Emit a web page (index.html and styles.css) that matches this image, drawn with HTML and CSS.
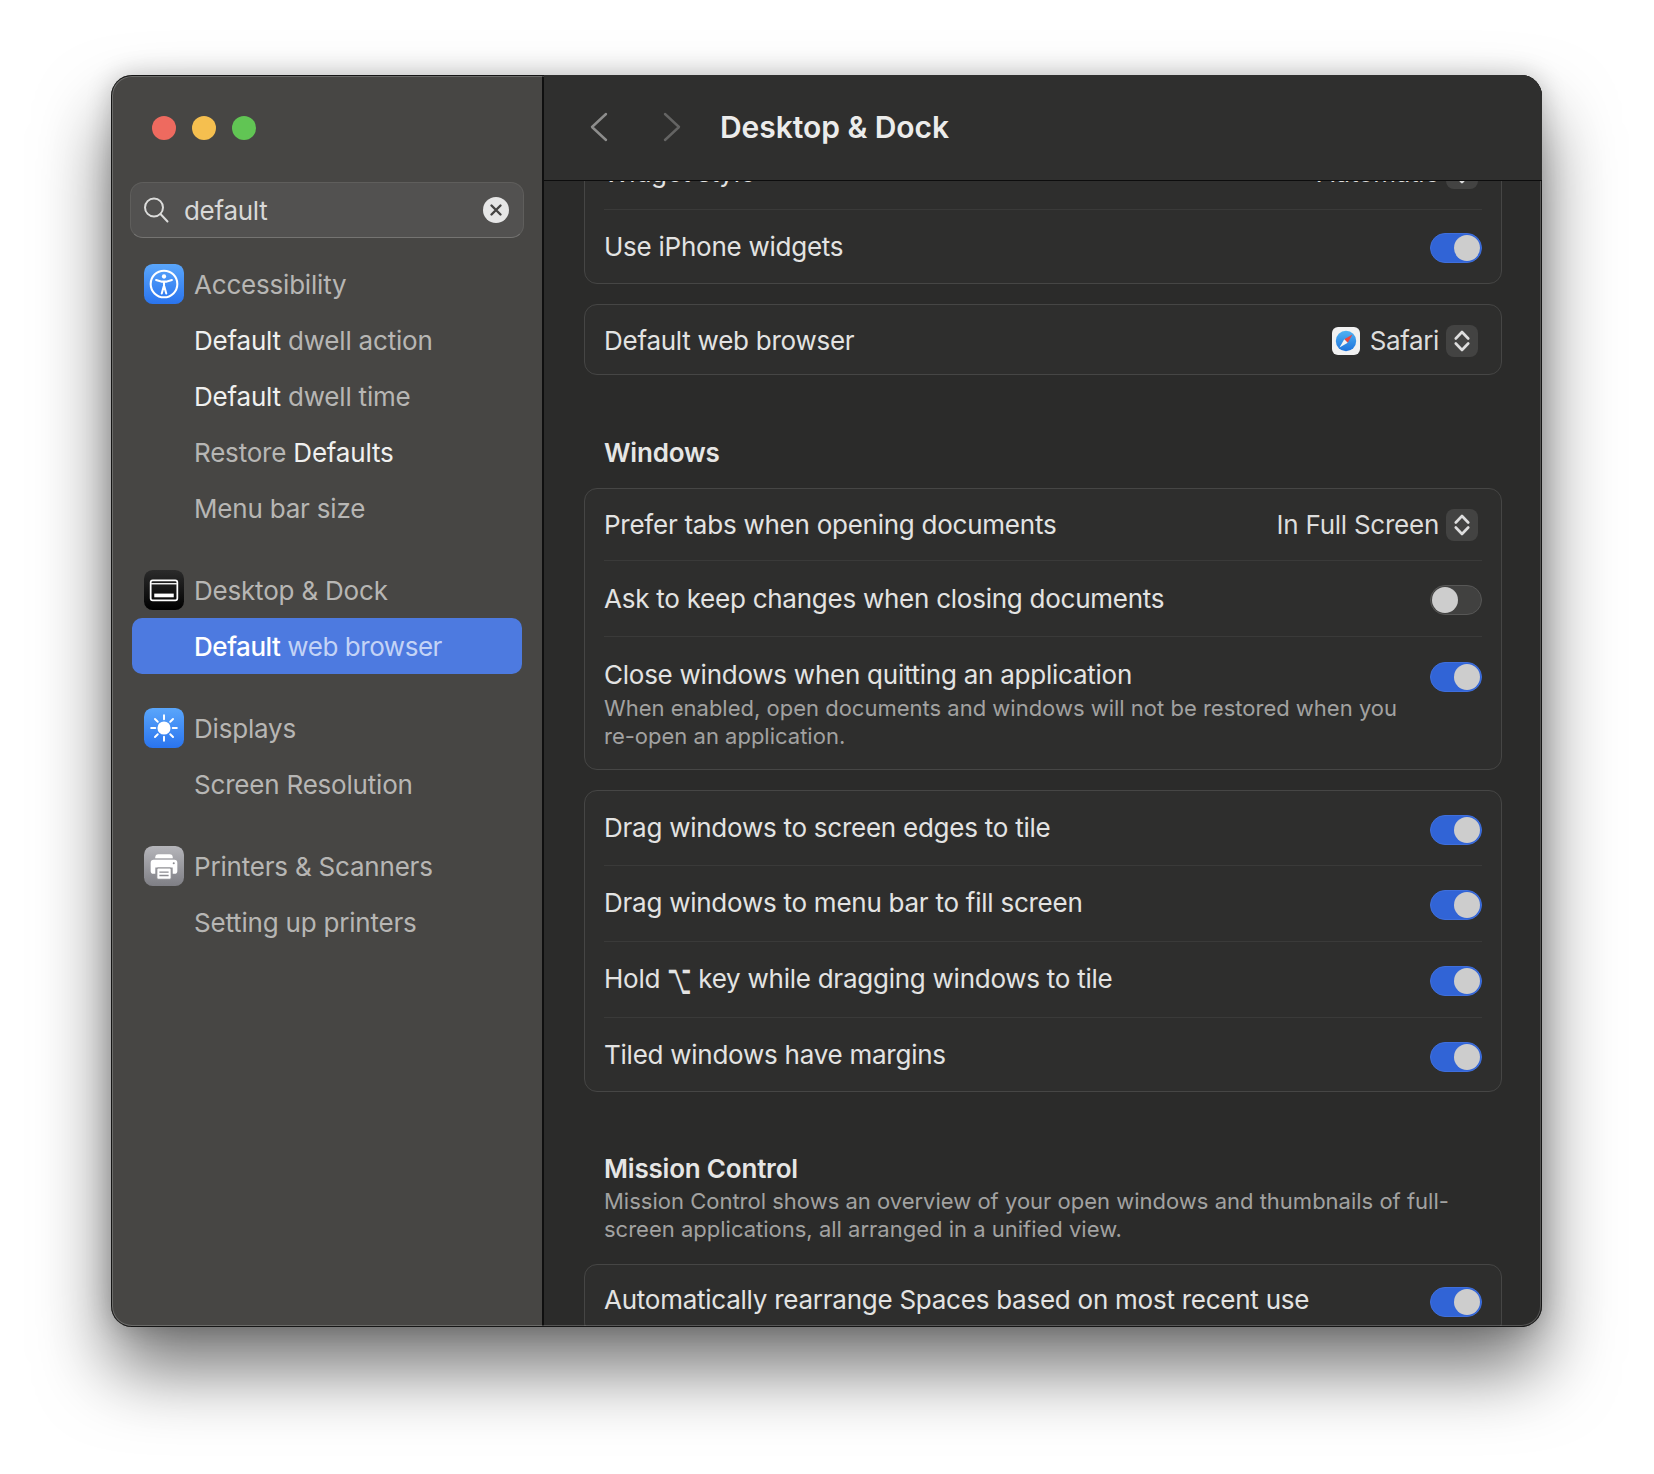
FILE: index.html
```html
<!DOCTYPE html>
<html lang="en">
<head>
    <meta charset="UTF-8">
    <meta name="viewport" content="width=device-width, initial-scale=1.0">
    <title>Desktop &amp; Dock</title>
    <link rel="stylesheet" href="styles.css">
</head>
<body>
    <div class="window">
        <aside class="sidebar">
            <div class="lights">
                <span class="light red"></span>
                <span class="light yellow"></span>
                <span class="light green"></span>
            </div>

            <div class="search">
                <svg class="search-icon" width="28" height="28" viewBox="0 0 28 28" fill="none" stroke="#dcdcdb" stroke-width="2" stroke-linecap="round">
                    <circle cx="12" cy="11.5" r="9"/>
                    <path d="M18.5 18l7 7.5"/>
                </svg>
                <span class="search-text">default</span>
                <span class="search-clear">
                    <svg width="14" height="14" viewBox="0 0 14 14" fill="none" stroke="#454443" stroke-width="2.4" stroke-linecap="round">
                        <path d="M2.5 2.5l9 9M11.5 2.5l-9 9"/>
                    </svg>
                </span>
            </div>

            <div class="group">
                <div class="group-title">
                    <svg class="app-icon" width="40" height="40" viewBox="0 0 39 39">
                        <defs>
                            <linearGradient id="blueA" x1="0" y1="0" x2="0" y2="1">
                                <stop offset="0" stop-color="#5aa6fb"/>
                                <stop offset="1" stop-color="#2a74ee"/>
                            </linearGradient>
                        </defs>
                        <rect width="39" height="39" rx="8.5" fill="url(#blueA)"/>
                        <circle cx="19.5" cy="19.5" r="13" fill="none" stroke="#fff" stroke-width="2"/>
                        <circle cx="19.5" cy="12.2" r="2.1" fill="#fff"/>
                        <path d="M11.8 15.6l5.6 1.6h4.2l5.6-1.6M19.5 17.4v5M19.2 22l-1.9 6.8M19.8 22l1.9 6.8" fill="none" stroke="#fff" stroke-width="2" stroke-linecap="round"/>
                    </svg>
                    <span>Accessibility</span>
                </div>
                <div class="item"><b>Default</b> dwell action</div>
                <div class="item"><b>Default</b> dwell time</div>
                <div class="item">Restore <b>Defaults</b></div>
                <div class="item">Menu bar size</div>
            </div>

            <div class="group">
                <div class="group-title">
                    <svg class="app-icon" width="40" height="40" viewBox="0 0 39 39">
                        <defs>
                            <linearGradient id="blackA" x1="0" y1="0" x2="0" y2="1">
                                <stop offset="0" stop-color="#2b2b2b"/>
                                <stop offset="1" stop-color="#000"/>
                            </linearGradient>
                        </defs>
                        <rect width="39" height="39" rx="8.5" fill="url(#blackA)"/>
                        <rect x="6.5" y="10" width="26" height="19.5" rx="2" fill="none" stroke="#fff" stroke-width="1.7"/>
                        <path d="M7 13.4h25" stroke="#fff" stroke-width="1.3"/>
                        <rect x="10" y="23" width="19" height="3.6" fill="#fff"/>
                    </svg>
                    <span>Desktop &amp; Dock</span>
                </div>
                <div class="item selected"><b>Default</b> web browser</div>
            </div>

            <div class="group">
                <div class="group-title">
                    <svg class="app-icon" width="40" height="40" viewBox="0 0 39 39">
                        <rect width="39" height="39" rx="8.5" fill="url(#blueA)"/>
                        <circle cx="19.5" cy="19.5" r="6.4" fill="#fff"/>
                        <path d="M19.5 7v4M19.5 28v4M7 19.5h4M28 19.5h4M10.7 10.7l2.7 2.7M25.6 25.6l2.7 2.7M10.7 28.3l2.7-2.7M25.6 13.4l2.7-2.7" stroke="#fff" stroke-width="1.9" stroke-linecap="round"/>
                    </svg>
                    <span>Displays</span>
                </div>
                <div class="item">Screen Resolution</div>
            </div>

            <div class="group">
                <div class="group-title">
                    <svg class="app-icon" width="40" height="40" viewBox="0 0 39 39">
                        <defs>
                            <linearGradient id="grayA" x1="0" y1="0" x2="0" y2="1">
                                <stop offset="0" stop-color="#b5b5ba"/>
                                <stop offset="1" stop-color="#7f7f85"/>
                            </linearGradient>
                        </defs>
                        <rect width="39" height="39" rx="8.5" fill="url(#grayA)"/>
                        <path d="M11 11q0-3 3-3h11q3 0 3 3v1H11z" fill="#fff"/>
                        <path d="M9.5 13.5h20q3 0 3 3v8q0 2.5-3 2.5h-1.5v-6H11v6H9.5q-3 0-3-2.5v-8q0-3 3-3z" fill="#fff"/>
                        <rect x="12.5" y="21.5" width="14" height="11" rx="1.2" fill="#fff" stroke="#8b8b90" stroke-width="1"/>
                        <path d="M15 25.5h9M15 28.8h9" stroke="#8b8b90" stroke-width="1.3"/>
                        <circle cx="29" cy="16.8" r="1" fill="#8b8b90"/>
                    </svg>
                    <span>Printers &amp; Scanners</span>
                </div>
                <div class="item">Setting up printers</div>
            </div>
        </aside>

        <main class="content">
            <header class="toolbar">
                <svg class="chevron" width="18" height="30" viewBox="0 0 18 30" fill="none" stroke="#8d8d8c" stroke-width="2.4" stroke-linecap="round" stroke-linejoin="round">
                    <path d="M16 2L2 15l14 13"/>
                </svg>
                <svg class="chevron forward" width="18" height="30" viewBox="0 0 18 30" fill="none" stroke="#646463" stroke-width="2.4" stroke-linecap="round" stroke-linejoin="round">
                    <path d="M2 2l14 13L2 28"/>
                </svg>
                <h1>Desktop &amp; Dock</h1>
            </header>

            <div class="scroll">
                <div class="panel first">
                    <div class="row short">
                        <span class="label">Widget style</span>
                        <span class="picker">Automatic
                            <span class="stepper"><svg width="16" height="24" viewBox="0 0 16 24" fill="none" stroke="#dedede" stroke-width="2.6" stroke-linecap="round" stroke-linejoin="round"><path d="M1.8 9.5L8 3l6.2 6.5M1.8 14.5L8 21l6.2-6.5"/></svg></span>
                        </span>
                    </div>
                    <div class="row">
                        <span class="label">Use iPhone widgets</span>
                        <span class="toggle on"></span>
                    </div>
                </div>

                <div class="panel">
                    <div class="row browser">
                        <span class="label">Default web browser</span>
                        <span class="picker">
                            <svg class="safari" width="28" height="28" viewBox="0 0 28 28">
                                <defs>
                                    <linearGradient id="safariBlue" x1="0" y1="0" x2="0" y2="1">
                                        <stop offset="0" stop-color="#4fb2f2"/>
                                        <stop offset="1" stop-color="#1e73dc"/>
                                    </linearGradient>
                                </defs>
                                <rect width="28" height="28" rx="6" fill="#f1f1f1"/>
                                <circle cx="14" cy="14" r="10.2" fill="url(#safariBlue)"/>
                                <path d="M20.5 7.5L12.3 12.3l3.4 3.4z" fill="#f0443a"/>
                                <path d="M7.5 20.5l8.2-4.8-3.4-3.4z" fill="#f4f4f4"/>
                            </svg>
                            Safari
                            <span class="stepper"><svg width="16" height="24" viewBox="0 0 16 24" fill="none" stroke="#dedede" stroke-width="2.6" stroke-linecap="round" stroke-linejoin="round"><path d="M1.8 9.5L8 3l6.2 6.5M1.8 14.5L8 21l6.2-6.5"/></svg></span>
                        </span>
                    </div>
                </div>

                <div class="section-head">
                    <h2>Windows</h2>
                </div>

                <div class="panel close-up">
                    <div class="row tabs">
                        <span class="label">Prefer tabs when opening documents</span>
                        <span class="picker">In Full Screen
                            <span class="stepper"><svg width="16" height="24" viewBox="0 0 16 24" fill="none" stroke="#dedede" stroke-width="2.6" stroke-linecap="round" stroke-linejoin="round"><path d="M1.8 9.5L8 3l6.2 6.5M1.8 14.5L8 21l6.2-6.5"/></svg></span>
                        </span>
                    </div>
                    <div class="row">
                        <span class="label">Ask to keep changes when closing documents</span>
                        <span class="toggle"></span>
                    </div>
                    <div class="row tall">
                        <div class="label-wrap">
                            <span class="label">Close windows when quitting an application</span>
                            <p class="note">When enabled, open documents and windows will not be restored when you re-open an application.</p>
                        </div>
                        <span class="toggle on"></span>
                    </div>
                </div>

                <div class="panel raised">
                    <div class="row lead">
                        <span class="label">Drag windows to screen edges to tile</span>
                        <span class="toggle on"></span>
                    </div>
                    <div class="row">
                        <span class="label">Drag windows to menu bar to fill screen</span>
                        <span class="toggle on"></span>
                    </div>
                    <div class="row">
                        <span class="label">Hold <span class="key">⌥</span> key while dragging windows to tile</span>
                        <span class="toggle on"></span>
                    </div>
                    <div class="row tail">
                        <span class="label">Tiled windows have margins</span>
                        <span class="toggle on"></span>
                    </div>
                </div>

                <div class="section-head mission">
                    <h2>Mission Control</h2>
                    <p class="note">Mission Control shows an overview of your open windows and thumbnails of full-screen applications, all arranged in a unified view.</p>
                </div>

                <div class="panel raised">
                    <div class="row spaces">
                        <span class="label">Automatically rearrange Spaces based on most recent use</span>
                        <span class="toggle on"></span>
                    </div>
                </div>
            </div>
        </main>
    </div>
</body>
</html>
```

FILE: styles.css
```css
* {
    box-sizing: border-box;
}

html, body {
    margin: 0;
    height: 100%;
}

body {
    font-family: Inter, "Liberation Sans", sans-serif;
    background: #fff;
    padding: 75px 112px 147px 111px;
    overflow: hidden;
}

.window {
    display: flex;
    height: 1252px;
    border-radius: 21px;
    overflow: hidden;
    background: #2b2b2a;
    position: relative;
    box-shadow: 0 42px 72px rgba(0,0,0,0.55), 0 0 26px rgba(0,0,0,0.2);
}

.window::after {
    content: "";
    position: absolute;
    inset: 0;
    border-radius: 21px;
    box-shadow: inset 0 0 0 1px #161616, inset 0 0 0 2px rgba(255,255,255,0.2);
    pointer-events: none;
}

/* sidebar */
.sidebar {
    width: 433px;
    flex: none;
    background: #474644;
    padding: 41px 20px 0 21px;
    border-right: 2px solid #0f0f0f;
    font-size: 26px;
    letter-spacing: -0.2px;
    color: #b7b6b4;
}

.lights {
    display: flex;
    gap: 16px;
    padding-left: 20px;
}

.light {
    width: 24px;
    height: 24px;
    border-radius: 50%;
}

.red { background: #ee6a5f; }
.yellow { background: #f5bf4f; }
.green { background: #61c554; }

.search {
    display: flex;
    align-items: center;
    height: 56px;
    margin: 42px -2px 18px;
    padding: 0 14px 0 11px;
    border: 1px solid #5f5e5c;
    border-bottom-color: #757472;
    border-radius: 13px;
    background: #525150;
}

.search-icon {
    flex: none;
}

.search-text {
    flex: 1;
    margin-left: 14px;
    font-size: 26px;
    letter-spacing: -0.3px;
    color: #d8d8d7;
}

.search-clear {
    display: flex;
    align-items: center;
    justify-content: center;
    width: 26px;
    height: 26px;
    border-radius: 50%;
    background: #e6e6e6;
}

.group {
    margin-bottom: 26px;
}

.group-title {
    display: flex;
    align-items: center;
    gap: 10px;
    height: 56px;
    padding-left: 12px;
}

.app-icon {
    flex: none;
}

.item {
    height: 56px;
    line-height: 58px;
    padding-left: 62px;
    border-radius: 10px;
}

.item b {
    font-weight: 400;
    color: #f0f0ef;
}

.item.selected {
    background: #4d7ae0;
    color: #c3d3f6;
    letter-spacing: -0.45px;
}

.item.selected b {
    color: #fff;
    font-weight: 500;
}

/* main side */
.content {
    flex: 1;
    min-width: 0;
    display: flex;
    flex-direction: column;
    background: #2b2b2a;
}

.toolbar {
    height: 106px;
    flex: none;
    display: flex;
    align-items: center;
    padding: 0 0 2px 46px;
    background: #2f2f2e;
    border-bottom: 1px solid #0d0d0d;
    position: relative;
    z-index: 1;
}

.chevron {
    flex: none;
}

.chevron.forward {
    margin-left: 55px;
}

.toolbar h1 {
    margin: 0 0 0 39px;
    font-size: 30px;
    font-weight: 600;
    letter-spacing: -0.05px;
    color: #ececeb;
}

.scroll {
    flex: 1;
    min-height: 0;
    overflow: hidden;
    padding: 0 40px;
}

.panel {
    border: 1.5px solid #464645;
    border-radius: 13px;
    background: #2e2e2d;
    padding: 0 19px;
    margin-bottom: 21px;
}

.panel.first {
    margin-top: -27px;
    margin-bottom: 20px;
}

.panel.close-up {
    margin-bottom: 20px;
}

.raised .label {
    margin-bottom: 2px;
}

.row {
    display: flex;
    align-items: center;
    justify-content: space-between;
    height: 76px;
    border-bottom: 1.5px solid #3a3a39;
    font-size: 26px;
    letter-spacing: -0.25px;
    color: #e3e3e2;
}

.row:last-child {
    height: 73px;
    border-bottom: none;
}

.row.lead {
    height: 75px;
}

.row.tail {
    padding-top: 2px;
}

.row.short {
    height: 55px;
    padding-bottom: 19px;
}

.row.browser {
    height: 69px;
    padding-top: 2px;
}

.row.browser .picker {
    letter-spacing: -0.4px;
}

.row.tabs {
    height: 72px;
}

.row.tall {
    height: 132px;
    align-items: flex-start;
    padding-top: 22px;
}

.row.spaces {
    height: 70px;
}

.label-wrap {
    width: 810px;
}

.note {
    margin: 0;
    font-size: 22px;
    line-height: 28px;
    letter-spacing: 0;
    color: #a2a2a1;
}

.label-wrap .note {
    margin-top: 4px;
}

.key {
    display: inline-block;
    font-family: "DejaVu Sans", sans-serif;
    font-size: 21px;
    transform: translateY(-1px) scaleY(2);
}

.picker {
    display: flex;
    align-items: center;
    color: #dddddc;
    white-space: nowrap;
    margin-right: 4px;
}

.safari {
    margin-right: 10px;
}

.stepper {
    display: flex;
    align-items: center;
    justify-content: center;
    width: 32px;
    height: 32px;
    margin-left: 7px;
    border-radius: 8px;
    background: #434342;
}

.toggle {
    position: relative;
    flex: none;
    width: 52px;
    height: 30px;
    margin-top: 3px;
    border-radius: 15px;
    background: #414140;
    border: 1px solid #575756;
}

.toggle::after {
    content: "";
    position: absolute;
    top: 1px;
    left: 1px;
    width: 26px;
    height: 26px;
    border-radius: 50%;
    background: #cdcdcd;
}

.toggle.on {
    background: #3164d6;
    border-color: #3f6fdc;
}

.toggle.on::after {
    left: 23px;
}

.section-head {
    padding: 39px 20px 17px;
}

.section-head h2 {
    margin: 0;
    font-size: 26px;
    line-height: 36px;
    font-weight: 600;
    letter-spacing: -0.2px;
    color: #e6e6e5;
}

.section-head.mission {
    padding-top: 38px;
    padding-bottom: 21px;
}
```
